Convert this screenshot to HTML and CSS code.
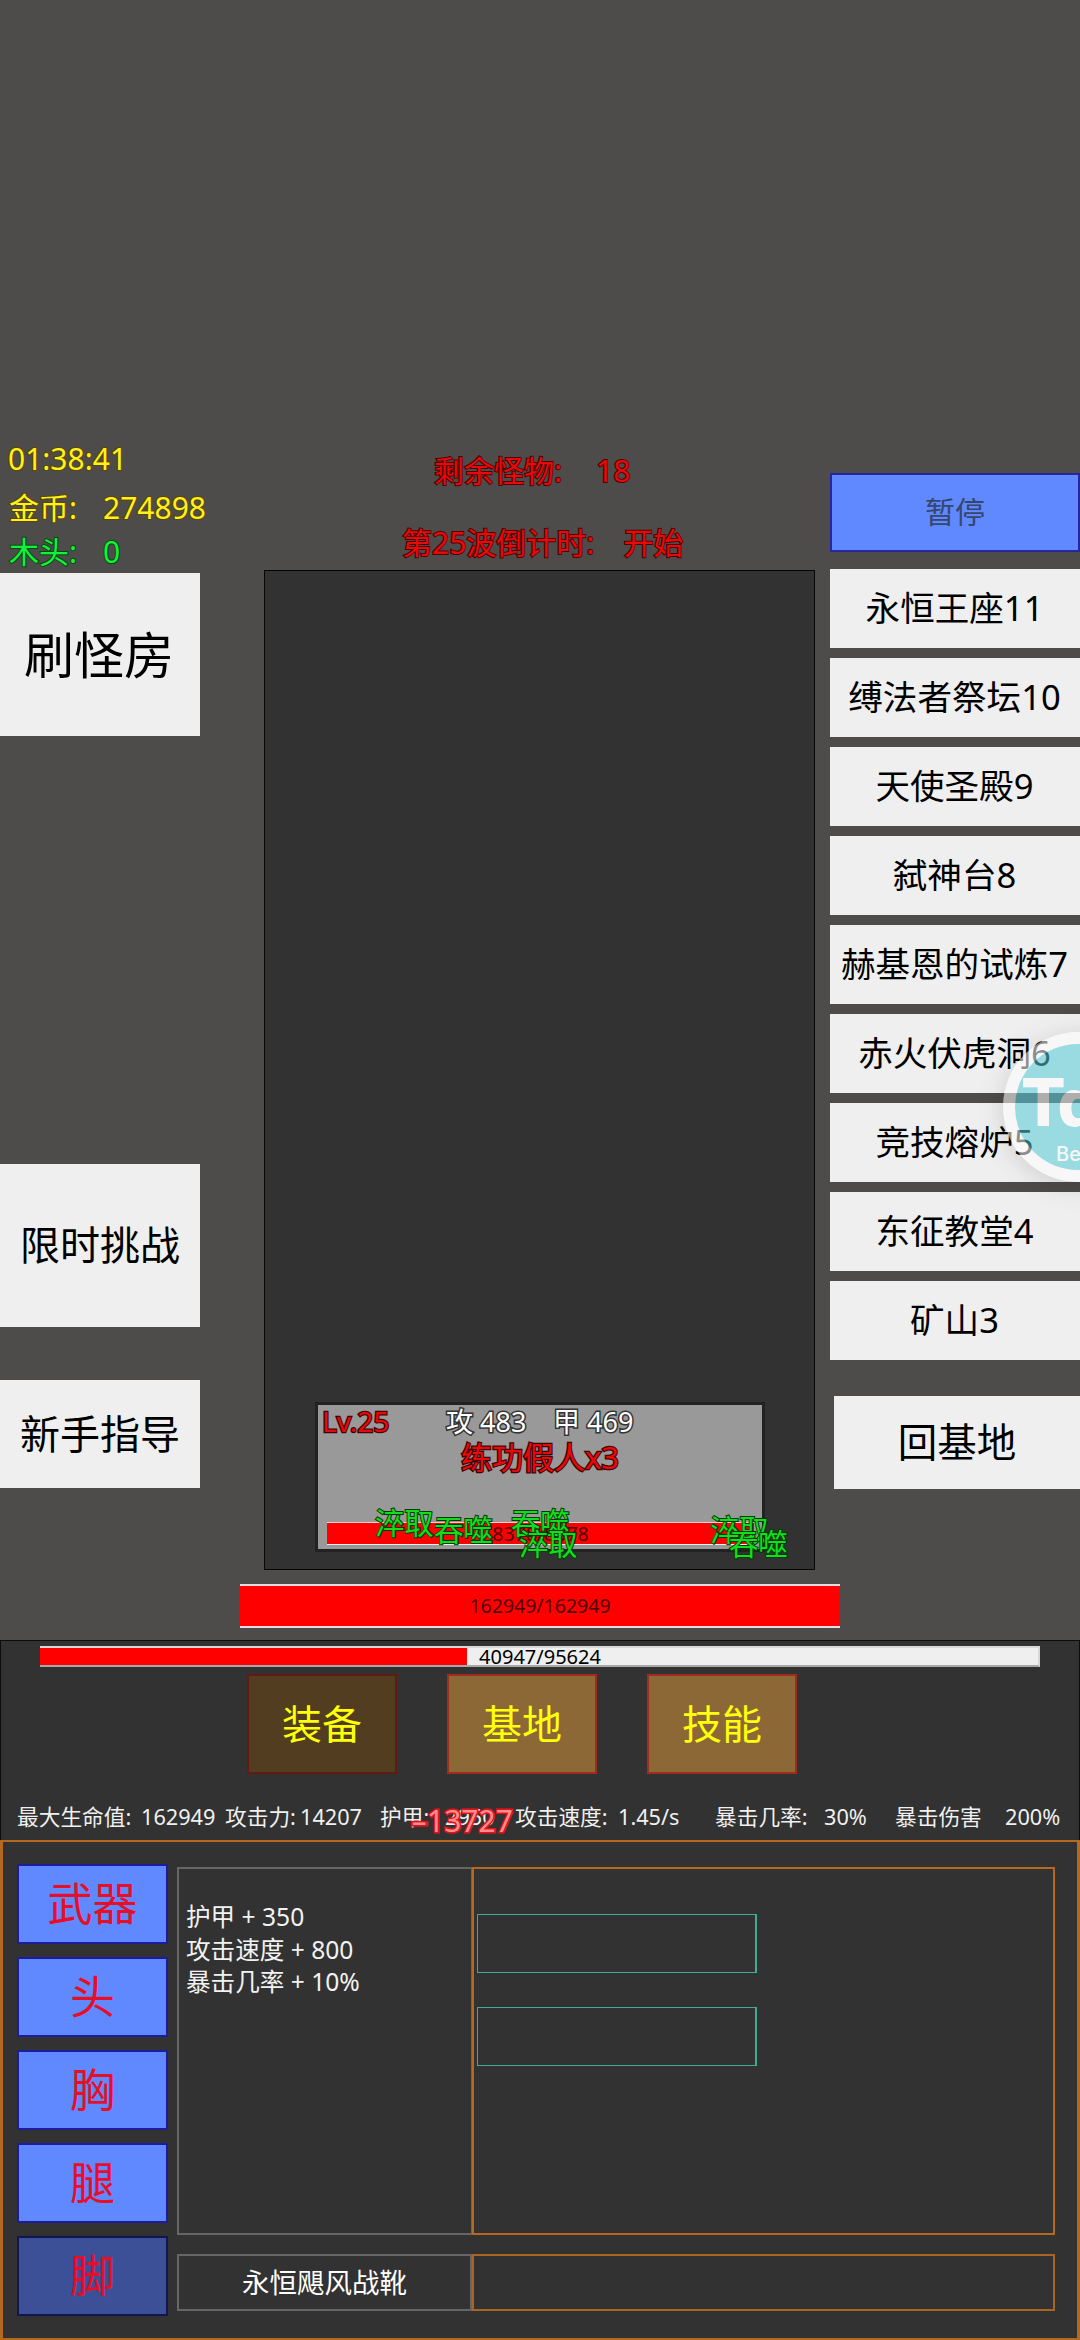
FILE: index.html
```html
<!DOCTYPE html>
<html lang="zh-CN">
<head>
<meta charset="utf-8">
<title>刷怪房</title>
<link rel="stylesheet" href="styles.css">
</head>
<body>
<div class="screen">
  <main class="field">
    <aside class="left">
      <div class="hud time">01:38:41</div>
      <div class="hud gold"><span class="key">金币:</span><span>274898</span></div>
      <div class="hud wood"><span class="key">木头:</span><span>0</span></div>
      <button class="btn room">刷怪房</button>
      <button class="btn limited">限时挑战</button>
      <button class="btn guide">新手指导</button>
    </aside>

    <section class="center">
      <div class="wave monsters"><span>剩余怪物:</span><span>18</span></div>
      <div class="wave countdown"><span>第25波倒计时:</span><span>开始</span></div>
      <div class="arena">
        <div class="enemy">
          <div class="enemy-head">
            <span class="level">Lv.25</span>
            <span class="stat atk">攻 483</span>
            <span class="stat def">甲 469</span>
          </div>
          <div class="enemy-name">练功假人x3</div>
          <div class="enemy-hp">8378/8378</div>
          <span class="float f1">淬取</span>
          <span class="float f2">吞噬</span>
          <span class="float f3">吞噬</span>
          <span class="float f4">淬取</span>
          <span class="float f5">淬取</span>
          <span class="float f6">吞噬</span>
        </div>
      </div>
      <div class="player-hp">162949/162949</div>
    </section>

    <nav class="right">
      <button class="btn pause">暂停</button>
      <button class="btn stage">永恒王座11</button>
      <button class="btn stage">缚法者祭坛10</button>
      <button class="btn stage">天使圣殿9</button>
      <button class="btn stage">弑神台8</button>
      <button class="btn stage">赫基恩的试炼7</button>
      <button class="btn stage">赤火伏虎洞6</button>
      <button class="btn stage">竞技熔炉5</button>
      <button class="btn stage">东征教堂4</button>
      <button class="btn stage">矿山3</button>
      <button class="btn home">回基地</button>
    </nav>
    <div class="bubble"><div class="bubble-core"><span class="tap">Tap</span><span class="beta">Beta</span></div></div>
  </main>

  <section class="dock">
    <div class="exp"><div class="exp-fill" style="width:42.8%"></div><span>40947/95624</span></div>
    <div class="tabs">
      <button class="tab active">装备</button>
      <button class="tab">基地</button>
      <button class="tab">技能</button>
    </div>
    <div class="stats">
      <span>最大生命值:</span><span>162949</span>
      <span>攻击力:</span><span>14207</span>
      <span>护甲:</span><span>2950</span>
      <span>攻击速度:</span><span>1.45/s</span>
      <span>暴击几率:</span><span>30%</span>
      <span>暴击伤害</span><span>200%</span>
      <div class="damage"><span class="minus">-</span>13727</div>
    </div>
  </section>

  <section class="gear">
    <div class="slots">
      <button class="slot">武器</button>
      <button class="slot">头</button>
      <button class="slot">胸</button>
      <button class="slot">腿</button>
      <button class="slot active">脚</button>
    </div>
    <div class="detail">
      <div class="attrs">
        <p>护甲 + 350</p>
        <p>攻击速度 + 800</p>
        <p>暴击几率 + 10%</p>
      </div>
      <div class="bag">
        <div class="cell"></div>
        <div class="cell"></div>
      </div>
      <div class="item-name">永恒飓风战靴</div>
      <div class="bag-foot"></div>
    </div>
  </section>
</div>
</body>
</html>
```
FILE: styles.css
```css
* { box-sizing: border-box; margin: 0; padding: 0; }

body {
  width: 1080px;
  height: 2340px;
  overflow: hidden;
  background: #4e4c4a;
  font-family: "Noto Sans", "Noto Sans CJK SC", sans-serif;
}

button { padding: 0 0 5px; font-family: inherit; border: 0; border-radius: 0; white-space: nowrap; }

.screen { display: flex; flex-direction: column; width: 1080px; height: 2340px; }

/* ---------- battle field ---------- */
.field {
  position: relative;
  display: grid;
  grid-template-columns: 240px 590px 250px;
  height: 1640px;
  overflow: hidden;
}

.left { display: flex; flex-direction: column; padding-top: 435px; }
.hud { display: flex; padding-left: 9px; font-size: 30px; color: #fff01e; -webkit-text-stroke: 2px #5a4600; paint-order: stroke fill; white-space: nowrap; }
.hud .key { width: 94px; }
.time { height: 48px; line-height: 48px; padding-left: 8px; }
.gold { height: 50px; line-height: 50px; }
.wood { height: 40px; line-height: 38px; color: #14f03c; -webkit-text-stroke-color: #004a0c; }

.btn { display: block; background: #efefef; color: #000; text-align: center; }
.room { width: 200px; height: 163px; font-size: 50px; padding-right: 2px; }
.limited { width: 200px; height: 163px; margin-top: 428px; font-size: 40px; }
.guide { width: 200px; height: 108px; margin-top: 53px; font-size: 40px; }

.center { padding-top: 435px; }
.wave { display: flex; height: 72px; line-height: 72px; font-size: 30px; color: #e60a0a; -webkit-text-stroke: 2px #500000; paint-order: stroke fill; white-space: nowrap; }
.monsters { padding-left: 194px; gap: 34px; }
.countdown { padding-left: 162px; height: 63px; gap: 29px; }

.arena {
  width: 551px;
  height: 1000px;
  margin-left: 24px;
  padding: 831px 0 0 50px;
  border: 1px solid #060606;
  background: #323232;
}

.enemy {
  position: relative;
  width: 450px;
  height: 150px;
  border: 3px solid #222;
  background: #999;
}
.enemy-head { display: flex; height: 33px; line-height: 32px; padding-left: 4px; color: #e60a0a; font-size: 28px; white-space: nowrap; -webkit-text-stroke: 2.5px #400; paint-order: stroke fill; }
.stat { font-size: 27px; color: #fff; line-height: 34px; -webkit-text-stroke: 3px #333; }
.level { width: 124px; }
.atk { width: 107px; }
.enemy-name { height: 40px; line-height: 38px; font-size: 31px; text-align: center; color: #e60a0a; -webkit-text-stroke: 2.5px #400; paint-order: stroke fill; }
.enemy-hp {
  width: 427px;
  height: 23px;
  margin: 44px 0 0 9px;
  border-top: 1px solid #ffd0d0;
  border-bottom: 1px solid #eee;
  background: #f00;
  color: #500000;
  font-size: 19.5px;
  line-height: 21px;
  text-align: center;
}

/* combat text drifting over the enemy card */
.float { position: absolute; font-size: 29.3px; line-height: 30px; color: #14dc1e; -webkit-text-stroke: 2px #003c00; paint-order: stroke fill; white-space: nowrap; }
.f1 { left: 57px; top: 103px; }
.f2 { left: 116px; top: 110px; }
.f3 { left: 193px; top: 103px; }
.f4 { left: 201px; top: 124px; }
.f5 { left: 392px; top: 110px; }
.f6 { left: 411px; top: 124px; }

.player-hp {
  width: 600px;
  height: 44px;
  margin-top: 14px;
  border-top: 2px solid #e8dcdc;
  border-bottom: 2px solid #e8dcdc;
  background: #f00;
  color: #500000;
  font-size: 19.5px;
  line-height: 40px;
  text-align: center;
}

.right { display: flex; flex-direction: column; padding-top: 473px; }
.pause { height: 79px; margin-bottom: 17px; border: 2px solid #2626a0; background: #6088ff; color: #35466f; font-size: 30px; }
.stage { flex: none; height: 79px; margin-bottom: 10px; font-size: 34.6px; padding-right: 1px; }
.home { height: 93px; margin: 26px 0 0 4px; font-size: 39.5px; }

/* floating assistant button, half off the edge */
.bubble {
  position: absolute;
  left: 1003px;
  top: 1032px;
  width: 150px;
  height: 150px;
  padding: 12px;
  border-radius: 50%;
  background: #fff;
  box-shadow: 0 4px 24px rgba(0, 0, 0, .25);
  opacity: .55;
}
.bubble-core { width: 126px; height: 126px; padding: 25px 0 0 6px; border-radius: 50%; background: #55cbd6; color: #fff; white-space: nowrap; }
.tap, .beta { display: block; }
.tap { font: 800 66px/66px Inter, sans-serif; font-feature-settings: "cv11"; letter-spacing: -3px; }
.beta { margin: 9px 0 0 35px; font: 500 20px/20px Inter, sans-serif; }

/* ---------- dock ---------- */
.dock { height: 200px; border: 1px solid #0c0c0c; border-bottom: 0; background: #323232; }
.exp {
  position: relative;
  width: 1000px;
  height: 21px;
  margin: 5px auto 0;
  border: 2px solid #d8d8d8;
  border-left: 0;
  border-bottom-color: #a8a8a8;
  background: #efefef;
  color: #000;
  font-size: 20px;
  line-height: 18px;
  text-align: center;
}
.exp-fill { height: 17px; background: #f00; }
.exp span { position: absolute; inset: 0 -2px 0 0; }

.tabs { display: flex; gap: 50px; margin: 7px 0 0 246px; }
.tab { width: 150px; height: 100px; border: 2px solid #a02c20; background: #8c6836; color: #ffff0a; font-size: 40px; }
.tab.active { border-color: #641a14; background: #533d20; }

.stats {
  position: relative;
  display: grid;
  grid-template-columns: 124px 84px 75px 80px 65px 70px 103px 97px 109px 71px 110px 60px;
  height: 66px;
  margin-top: 9px;
  padding-left: 16px;
  line-height: 67px;
  font-size: 21.7px;
  color: #f0f0f0;
  white-space: nowrap;
}
.damage { position: absolute; left: 410px; top: 4px; font-size: 30px; color: #ff8c8c; -webkit-text-stroke: 3px #e0141c; paint-order: stroke fill; text-shadow: 0 0 3px #e0141c; }
.minus { display: inline-block; width: 16px; transform: scaleX(1.7); transform-origin: 0 50%; }

/* ---------- gear panel ---------- */
.gear { display: flex; height: 500px; padding: 22px 0 0 14px; gap: 9px; border: 3px solid #b4691e; border-width: 2px 3px; background: #323232; }
.slots { display: flex; flex-direction: column; gap: 13px; width: 151px; }
.slot { flex: none; height: 80px; border: 2px solid #1c1c9c; background: #6088ff; color: #e60f28; font-size: 45px; }
.slot.active { border-color: #14144e; background: #3c5098; }

.detail { display: grid; grid-template-columns: 295px 583px; grid-template-rows: 368px 57px; row-gap: 19px; padding-top: 3px; }
.attrs { padding: 32px 0 0 7px; border: 2px solid #666; border-right-width: 1px; color: #f2f2f2; font-size: 24.6px; line-height: 32.7px; }
.bag { display: flex; flex-direction: column; gap: 34px; padding: 45px 0 0 3px; border: 2px solid #b4691e; }
.cell { width: 280px; height: 59px; border: 1px solid #40ac90; border-right-width: 2px; }
.item-name { border: 2px solid #666; color: #fff; font-size: 27.5px; line-height: 53px; text-align: center; }
.bag-foot { border: 2px solid #a86524; }
```
